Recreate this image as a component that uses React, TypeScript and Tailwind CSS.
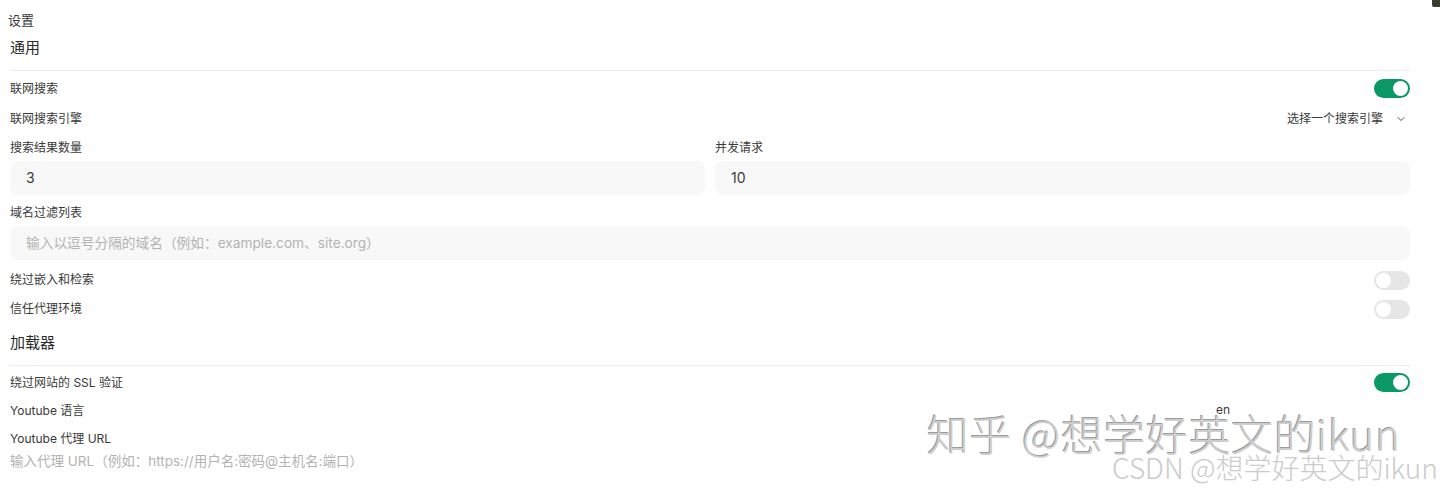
import React from "react";
import { ChevronDown } from "lucide-react";

function Toggle({ on }: { on: boolean }) {
  return (
    <div
      className={
        on
          ? "w-[36px] h-[19px] rounded-full bg-[#0a9867] flex items-center justify-end px-[2px]"
          : "w-[36px] h-[19px] rounded-full bg-[#e6e6e6] flex items-center justify-start px-[2px]"
      }
    >
      <div className="w-[15px] h-[15px] rounded-full bg-white" />
    </div>
  );
}

export default function App() {
  return (
    <div className="relative w-[1440px] h-[493px] bg-white overflow-hidden font-['Inter','Noto_Sans_CJK_SC',sans-serif] text-[#3a3a3a]">
      <div className="absolute right-0 top-0 w-[8px] h-[7px] bg-[#3a3a33] rounded-bl-[2px]" />
      <div className="w-[1400px] ml-[10px] flex flex-col">
        <div className="pt-[10px] -ml-[2px] text-[13px] leading-5">设置</div>
        <div className="mt-[6px] text-[15px] leading-6 text-[#2a2a2a]">通用</div>
        <div className="mt-[10px] h-px bg-[#ededed]" />

        <div className="mt-[8px] h-[19px] flex items-center justify-between">
          <span className="text-xs">联网搜索</span>
          <Toggle on />
        </div>

        <div className="mt-[11px] h-[20px] flex items-center justify-between">
          <span className="text-xs">联网搜索引擎</span>
          <div className="flex items-center gap-[13px] pr-[3px] text-xs">
            <span className="-mr-[1px]">选择一个搜索引擎</span>
            <ChevronDown size={12} strokeWidth={2} className="text-[#555]" />
          </div>
        </div>

        <div className="mt-[11px] grid grid-cols-2 gap-x-[10px]">
          <div className="flex flex-col">
            <div className="h-[16px] flex items-center text-xs">搜索结果数量</div>
            <div className="mt-[5px] h-[34px] rounded-lg bg-[#f8f8f8] flex items-center px-4 text-sm">3</div>
          </div>
          <div className="flex flex-col">
            <div className="h-[16px] flex items-center text-xs">并发请求</div>
            <div className="mt-[5px] h-[34px] rounded-lg bg-[#f8f8f8] flex items-center px-4 text-sm">10</div>
          </div>
        </div>

        <div className="mt-[10px] h-[16px] flex items-center text-xs">域名过滤列表</div>
        <div className="mt-[5px] h-[34px] rounded-lg bg-[#f8f8f8] flex items-center px-4 text-[13.7px] text-[#b3b3b3]">
          输入以逗号分隔的域名（例如：example.com、site.org）
        </div>

        <div className="mt-[10px] h-[20px] flex items-center justify-between">
          <span className="text-xs">绕过嵌入和检索</span>
          <Toggle on={false} />
        </div>
        <div className="mt-[9px] h-[20px] flex items-center justify-between">
          <span className="text-xs">信任代理环境</span>
          <Toggle on={false} />
        </div>

        <div className="mt-[12px] text-[15px] leading-6 text-[#2a2a2a]">加载器</div>
        <div className="mt-[10px] h-px bg-[#ededed]" />

        <div className="mt-[7px] h-[19px] flex items-center justify-between">
          <span className="text-xs">绕过网站的 SSL 验证</span>
          <Toggle on />
        </div>

        <div className="mt-[9px] h-[20px] flex items-center justify-between">
          <span className="text-xs">Youtube 语言</span>
          <span className="mr-[180px] -mt-[3px] text-xs">en</span>
        </div>

        <div className="mt-[10px] h-[16px] flex items-center text-xs">Youtube 代理 URL</div>
        <div className="mt-[6px] h-[16px] flex items-center text-[13.5px] text-[#b3b3b3]">
          输入代理 URL（例如：https://用户名:密码@主机名:端口）
        </div>
      </div>

      <div className="absolute left-[927px] top-[406px] text-[42px] leading-[54px] tracking-[0.6px] whitespace-nowrap font-light text-[#cdcdcd] [text-shadow:-1px_-1px_0_#9a9a9a,1px_1px_0_#ffffff] font-['Noto_Sans_CJK_SC',sans-serif]">
        知乎 @想学好英文的ikun
      </div>
      <div className="absolute left-[1112px] top-[449px] text-[28px] leading-[36px] whitespace-nowrap text-[#cbcbcb] font-light font-['Noto_Sans_CJK_SC',sans-serif]">
        CSDN @想学好英文的ikun
      </div>
    </div>
  );
}
